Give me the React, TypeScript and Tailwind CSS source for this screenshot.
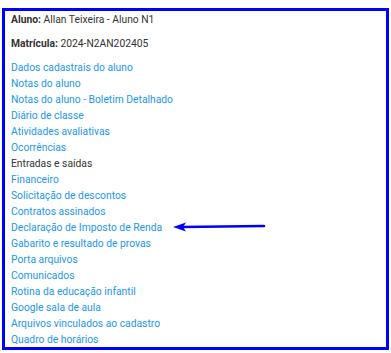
import React from "react";

const links: { t: string; dark?: boolean }[] = [
  { t: "Dados cadastrais do aluno" },
  { t: "Notas do aluno" },
  { t: "Notas do aluno - Boletim Detalhado" },
  { t: "Diário de classe" },
  { t: "Atividades avaliativas" },
  { t: "Ocorrências" },
  { t: "Entradas e saídas", dark: true },
  { t: "Financeiro" },
  { t: "Solicitação de descontos" },
  { t: "Contratos assinados" },
  { t: "Declaração de Imposto de Renda" },
  { t: "Gabarito e resultado de provas" },
  { t: "Porta arquivos" },
  { t: "Comunicados" },
  { t: "Rotina da educação infantil" },
  { t: "Google sala de aula" },
  { t: "Arquivos vinculados ao cadastro" },
  { t: "Quadro de horários" },
];

export default function App() {
  return (
    <div className="w-[391px] h-[353px] bg-white relative" style={{ fontFamily: "Roboto, 'Noto Sans', sans-serif" }}>
      <div className="absolute left-[2px] top-[8px] w-[387px] h-[342px] border-[3px] border-[#0000ff]" />
      <div className="pt-[12px] pl-[11px] text-[10.3px] leading-[16px] text-[#333]">
        <div>
          <span className="font-bold">Aluno:</span> Allan Teixeira - Aluno N1
        </div>
        <div className="mt-[8px]">
          <span className="font-bold">Matrícula:</span> 2024-N2AN202405
        </div>
        <div className="mt-[8px] flex flex-col">
          {links.map((l) => (
            <span key={l.t} className={l.dark ? "text-[#333]" : "text-[#2196f3]"}>
              {l.t}
            </span>
          ))}
        </div>
      </div>
      <svg className="absolute left-[170px] top-[220px]" width="98" height="14" viewBox="0 0 98 14">
        <line x1="12" y1="7" x2="94" y2="6" stroke="#0000ff" strokeWidth="2.5" strokeLinecap="round" />
        <polygon points="3,7 16,2.5 13,7 16,11.5" fill="#0000ff" />
      </svg>
    </div>
  );
}
